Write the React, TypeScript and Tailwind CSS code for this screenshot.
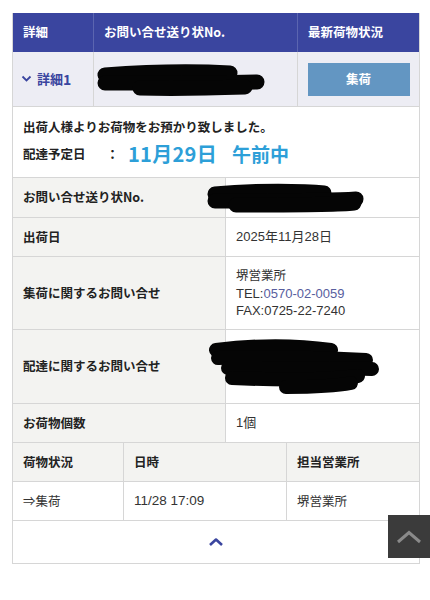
import React from "react";

const Blob = ({ w, h, paths, sw = 14 }: { w: number; h: number; paths: string[]; sw?: number }) => (
  <svg width={w} height={h} viewBox={`0 0 ${w} ${h}`} className="block">
    {paths.map((d, i) => (
      <path key={i} d={d} stroke="#050505" strokeWidth={sw} strokeLinecap="round" fill="none" />
    ))}
  </svg>
);

export default function App() {
  const font = { fontFamily: '"Noto Sans CJK JP", "Noto Sans", sans-serif' };
  const val = { fontFamily: '"Liberation Sans", "Noto Sans CJK JP", sans-serif' };
  return (
    <div className="relative w-[430px] h-[600px] bg-white pt-[13px]" style={font}>
      <div className="ml-[12px] w-[408px] border-x border-b border-[#d6d6d6] text-[#222]">
        {/* header */}
        <div className="grid grid-cols-[81px_204px_1fr] h-[39px] bg-[#3a459f] text-white text-[12.5px] font-bold">
          <div className="flex items-center pl-[10px] border-r border-[#5b65b0]">詳細</div>
          <div className="flex items-center pl-[10px] border-r border-[#5b65b0]">お問い合せ送り状No.</div>
          <div className="flex items-center pl-[10px]">最新荷物状況</div>
        </div>
        {/* summary row */}
        <div className="grid grid-cols-[81px_204px_1fr] h-[55px] bg-[#ededf4] border-b border-[#d6d6d6]">
          <div className="flex items-center pl-[8px] border-r border-[#d6d6d6] text-[#3a459f] text-[13px] font-bold">
            <svg width="11" height="8" viewBox="0 0 11 8" className="mr-[5px]">
              <path d="M1.5 1.5 L5.5 5.5 L9.5 1.5" stroke="#3a459f" strokeWidth="1.8" fill="none" />
            </svg>
            詳細<span className="text-[14px]">1</span>
          </div>
          <div className="flex items-center pl-[1px] border-r border-[#d6d6d6]">
            <Blob w={172} h={34} sw={15} paths={["M10 13 C 50 10, 100 9, 135 11", "M10 21 C 60 21, 120 21, 162 20", "M45 26 C 80 27, 120 26, 150 25"]} />
          </div>
          <div className="flex items-center justify-center">
            <div className="w-[102px] h-[33px] bg-[#6396c2] flex items-center justify-center text-white text-[12.5px] font-bold">集荷</div>
          </div>
        </div>
        {/* info */}
        <div className="h-[71px] border-b border-[#d6d6d6] pl-[10px] pt-[11px]">
          <div className="text-[12.5px] font-bold leading-[18px]">出荷人様よりお荷物をお預かり致しました。</div>
          <div className="flex items-center mt-[6px] h-[24px]">
            <span className="text-[12.5px] font-bold w-[83px]">配達予定日</span>
            <span className="text-[13px] font-bold w-[22px]">：</span>
            <span className="text-[20px] font-semibold text-[#2d9fd8] tracking-[0.3px]">11月29日</span>
            <span className="text-[19px] font-semibold text-[#2d9fd8] ml-[15px]">午前中</span>
          </div>
        </div>
        {/* detail rows */}
        <div className="grid grid-cols-[213px_1fr] h-[40px] border-b border-[#d6d6d6]">
          <div className="flex items-center pl-[10px] bg-[#f3f3f1] border-r border-[#d6d6d6] text-[12.5px] font-bold">お問い合せ送り状No.</div>
          <div className="flex items-center -ml-[20px]">
            <Blob w={162} h={32} sw={15} paths={["M9 12 C 50 8, 100 9, 118 11", "M9 19 C 60 19, 120 19, 150 17", "M30 23 C 80 23, 130 23, 148 21"]} />
          </div>
        </div>
        <div className="grid grid-cols-[213px_1fr] h-[39px] border-b border-[#d6d6d6]">
          <div className="flex items-center pl-[10px] bg-[#f3f3f1] border-r border-[#d6d6d6] text-[12.5px] font-bold">出荷日</div>
          <div className="flex items-center pl-[10px] text-[13px] text-[#333]" style={val}>2025年11月28日</div>
        </div>
        <div className="grid grid-cols-[213px_1fr] h-[73px] border-b border-[#d6d6d6]">
          <div className="flex items-center pl-[10px] bg-[#f3f3f1] border-r border-[#d6d6d6] text-[12.5px] font-bold">集荷に関するお問い合せ</div>
          <div className="flex flex-col justify-center pl-[10px] text-[13px] text-[#333] leading-[17px]" style={val}>
            <div className="text-[12.5px]">堺営業所</div>
            <div>TEL:<span className="text-[#585e9e]">0570-02-0059</span></div>
            <div>FAX:0725-22-7240</div>
          </div>
        </div>
        <div className="grid grid-cols-[213px_1fr] h-[74px] border-b border-[#d6d6d6]">
          <div className="flex items-center pl-[10px] bg-[#f3f3f1] border-r border-[#d6d6d6] text-[12.5px] font-bold">配達に関するお問い合せ</div>
          <div className="flex items-center -ml-[20px]">
            <Blob w={178} h={62} sw={14} paths={["M10 14 C 50 9, 90 9, 125 14", "M12 22 C 60 20, 120 22, 160 24", "M22 32 C 70 32, 130 32, 166 33", "M26 42 C 70 44, 120 44, 152 40", "M80 51 C 110 51, 130 50, 145 47"]} />
          </div>
        </div>
        <div className="grid grid-cols-[213px_1fr] h-[39px] border-b border-[#d6d6d6]">
          <div className="flex items-center pl-[10px] bg-[#f3f3f1] border-r border-[#d6d6d6] text-[12.5px] font-bold">お荷物個数</div>
          <div className="flex items-center pl-[10px] text-[13px] text-[#333]" style={val}>1個</div>
        </div>
        <div className="grid grid-cols-[111px_163px_1fr] h-[39px] border-b border-[#d6d6d6] bg-[#f3f3f1] text-[12.5px] font-bold">
          <div className="flex items-center pl-[10px] border-r border-[#d6d6d6]">荷物状況</div>
          <div className="flex items-center pl-[10px] border-r border-[#d6d6d6]">日時</div>
          <div className="flex items-center pl-[10px]">担当営業所</div>
        </div>
        <div className="grid grid-cols-[111px_163px_1fr] h-[39px] border-b border-[#d6d6d6] text-[12.5px] text-[#333]">
          <div className="flex items-center pl-[10px] border-r border-[#d6d6d6]">⇒集荷</div>
          <div className="flex items-center pl-[10px] border-r border-[#d6d6d6] text-[13.5px]" style={val}>11/28 17:09</div>
          <div className="flex items-center pl-[10px]">堺営業所</div>
        </div>
        <div className="h-[42px] flex items-center justify-center">
          <svg width="16" height="10" viewBox="0 0 16 10">
            <path d="M2 8 L8 2.5 L14 8" stroke="#3a459f" strokeWidth="2.6" fill="none" strokeLinejoin="round" />
          </svg>
        </div>
      </div>
      <div className="absolute left-[388px] top-[515px] w-[42px] h-[43px] bg-[#3b3b3b] flex items-center justify-center">
        <svg width="26" height="16" viewBox="0 0 26 16">
          <path d="M2 13 L13 3.5 L24 13" stroke="#8a8a8a" strokeWidth="3" fill="none" />
        </svg>
      </div>
    </div>
  );
}
